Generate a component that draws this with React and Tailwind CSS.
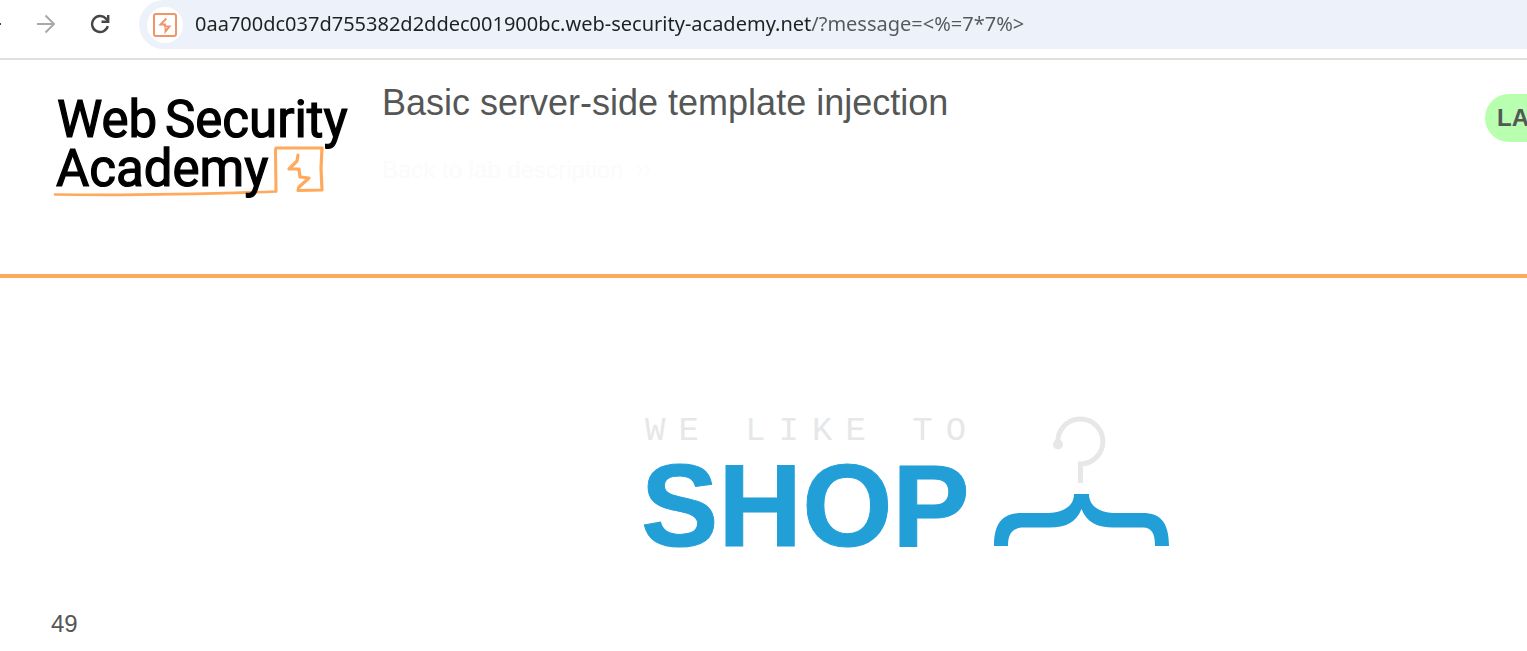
import React from "react";

function ForwardIcon() {
  return (
    <svg viewBox="0 0 20 20" className="size-5" fill="none" stroke="#a9a9a9" strokeWidth="2" aria-hidden="true">
      <path d="M1 10H18M9.500 1.500L18 10L9.500 18.500" />
    </svg>
  );
}

function ReloadIcon() {
  return (
    <svg viewBox="0 0 20 20" className="size-5" fill="none" stroke="#454746" strokeWidth="2.4" aria-hidden="true">
      <path d="M17.800 12.200A8 8 0 1 1 16 4.600L18 6.800" />
      <path d="M18.200 1V7.800H11.500" />
    </svg>
  );
}

function SiteIcon() {
  return (
    <svg viewBox="0 0 24 24" className="size-6" fill="none" stroke="#f0956a" aria-hidden="true">
      <rect x="1" y="1" width="22" height="22" rx="2" strokeWidth="2" />
      <path d="M13.300 5.500L7.500 11.500H12V13.500H16.500L12.500 18.500V15" strokeWidth="1.9" />
    </svg>
  );
}

function BrowserBar() {
  return (
    <div className="flex h-15 border-b-2 border-[#e0e0e0] bg-white">
      <div className="flex h-12 w-[139px] shrink-0 items-center">
        <button type="button" aria-label="Back" className="h-0.5 w-px bg-[#454746]" />
        <button type="button" aria-label="Forward" className="ml-[35px]">
          <ForwardIcon />
        </button>
        <button type="button" aria-label="Reload" className="ml-[34px]">
          <ReloadIcon />
        </button>
      </div>
      <div className="flex h-[49px] min-w-0 grow items-center rounded-l-full bg-[#edf2fa] pl-2">
        <button type="button" aria-label="Site information" className="flex size-9 shrink-0 items-center justify-center rounded-full bg-white">
          <SiteIcon />
        </button>
        <input
          type="text"
          aria-label="Address"
          defaultValue="0aa700dc037d755382d2ddec001900bc.web-security-academy.net/?message=<%=7*7%>"
          className="ml-3 h-full min-w-0 grow bg-[linear-gradient(90deg,#1f2021_616px,#54575b_616px)] bg-clip-text pb-0.5 font-['Noto_Sans',sans-serif] text-[20px] text-transparent caret-black outline-none"
        />
      </div>
    </div>
  );
}

function AcademyLogo() {
  return (
    <svg viewBox="0 0 304 112" className="h-[112px] w-[304px]" role="img" aria-label="Web Security Academy">
      <g fill="none" stroke="#ffa95c" strokeLinejoin="round" strokeLinecap="round">
        <path d="M5 104.500C60 105.500 140 104.500 226 101.500" strokeWidth="2.6" />
        <path d="M226 101L225.500 60L226 58L272 58" strokeWidth="3" />
        <path d="M272 58L271 78L272 100L248 100.500L249 97L259 88L250 87L249 79L239 79L247 71L248 65" strokeWidth="3.2" />
      </g>
      <g fill="#000" stroke="#000" strokeWidth="1.2" fontFamily="Roboto, sans-serif" fontWeight="400" fontSize="51">
        <text x="7" y="47">Web</text>
        <text x="115" y="47">Security</text>
        <text x="6" y="96">Academy</text>
      </g>
    </svg>
  );
}

function LabHeader() {
  return (
    <header className="flex h-[218px] items-start overflow-hidden border-b-4 border-[#ffa95c] pl-[50px]">
      <a href="#academy" className="mt-[30px] shrink-0">
        <AcademyLogo />
      </a>
      <div className="ml-7 mt-[23px] grow">
        <h1 className="text-4xl">Basic server-side template injection</h1>
        <a href="#lab" className="mt-[31px] flex items-center gap-3 text-2xl text-[#fafbfc]">
          Back to lab description
          <svg viewBox="0 0 16 16" className="size-4" fill="none" stroke="currentColor" strokeWidth="1.5" aria-hidden="true">
            <path d="M2 1L6 8L2 15M11 4L14 8L11 12" />
          </svg>
        </a>
      </div>
      <div className="mt-[34px] w-[42px] shrink-0">
        <p className="flex h-12 w-32 items-center rounded-l-full bg-[#b9ffb0] pl-3 text-2xl font-bold">LA</p>
      </div>
    </header>
  );
}

function ShopLogo() {
  return (
    <svg viewBox="0 0 540 170" className="h-[170px] w-[540px]" role="img" aria-label="We like to shop">
      <text x="5" y="32" fill="#e6e7e8" fontFamily="Liberation Mono, monospace" fontSize="34" letterSpacing="13">
        WE LIKE TO
      </text>
      <text
        x="1"
        y="138"
        fill="#239fd8"
        stroke="#239fd8"
        strokeWidth="1"
        fontFamily="Liberation Sans, sans-serif"
        fontWeight="700"
        fontSize="116"
      >
        SHOP
      </text>
      <circle cx="418" cy="36.5" r="5" fill="#e6e7e8" />
      <path d="M418 36A22.500 22.500 0 1 1 440.500 56V75" fill="none" stroke="#e6e7e8" strokeWidth="5" />
      <path
        d="M434 86H449C449 98 459 104 473 105H503C520 105 529 114 529 138H515C515 126 512 119.500 503 119.500H476C458 120 447 115 441.500 101C436 115 425 120 407 119.500H384C372 119.500 368 126 368 138H354C354 114 363 105 382 105H409C424 104 434 98 434 86Z"
        fill="#239fd8"
      />
    </svg>
  );
}

export default function App() {
  return (
    <div className="overflow-x-hidden bg-white font-['Liberation_Sans',Arial,sans-serif] text-[#555756]">
      <BrowserBar />
      <LabHeader />
      <main className="pt-[130px]">
        <div className="flex justify-center pl-[292px]">
          <ShopLogo />
        </div>
        <p className="mt-[30px] pl-[51px] text-2xl">49</p>
      </main>
    </div>
  );
}
